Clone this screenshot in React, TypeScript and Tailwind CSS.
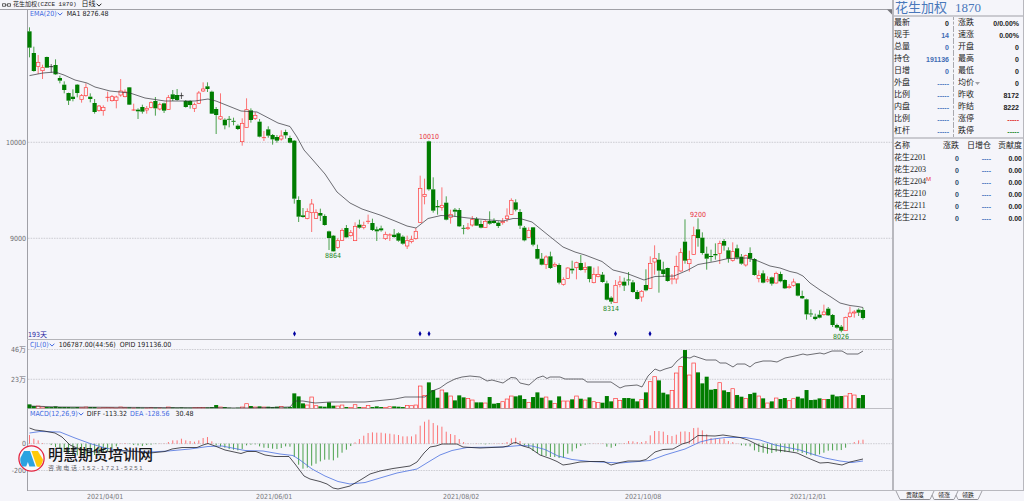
import React, { useState } from "react";

// d = down (filled green), u = up (hollow red), f = flat (black)
type Kind = "d" | "u" | "f";
type Bar = [Kind, number, number, number, number];

interface Segment {
  base: number;
  bars: Bar[];
}

// high, body top, body bottom, low in thirds of a chart unit, offset by base
const segments: Segment[] = [
  {
    base: 0,
    bars: [
      ["d", 82, 94, 143, 172], ["d", 140, 159, 213, 215], ["u", 165, 187, 199, 222], ["u", 194, 203, 212, 237],
      ["d", 170, 171, 203, 204], ["f", 192, 200, 200, 218], ["d", 178, 195, 223, 225], ["d", 227, 234, 242, 250],
      ["d", 244, 254, 270, 280], ["d", 278, 279, 302, 315], ["d", 268, 290, 297, 304], ["d", 252, 254, 279, 292],
      ["u", 282, 287, 298, 308], ["u", 250, 263, 287, 290], ["d", 280, 290, 297, 307], ["d", 297, 309, 336, 341],
      ["u", 315, 318, 331, 335], ["u", 316, 322, 332, 347], ["u", 275, 292, 292, 305], ["u", 285, 290, 302, 305],
      ["u", 287, 291, 301, 325], ["u", 237, 273, 285, 290], ["u", 268, 276, 290, 292], ["d", 261, 262, 314, 315],
      ["u", 311, 330, 330, 332], ["d", 325, 329, 334, 357], ["d", 314, 321, 335, 341], ["u", 318, 325, 330, 341],
      ["u", 304, 308, 322, 325], ["d", 291, 303, 325, 347], ["u", 308, 314, 327, 331], ["d", 308, 310, 332, 339],
      ["u", 285, 293, 328, 329], ["d", 270, 283, 297, 303], ["d", 267, 285, 300, 302], ["f", 278, 287, 287, 297],
      ["d", 300, 303, 321, 323], ["d", 301, 303, 315, 326], ["u", 308, 314, 325, 336], ["u", 273, 279, 310, 312],
      ["u", 247, 267, 273, 276], ["d", 247, 259, 267, 276], ["d", 272, 275, 341, 342], ["d", 321, 327, 345, 402],
      ["u", 280, 350, 357, 360], ["d", 355, 359, 376, 388], ["d", 348, 358, 360, 382],
    ],
  },
  {
    base: 180,
    bars: [
      ["d", 173, 184, 186, 196], ["d", 193, 197, 207, 210], ["u", 175, 190, 245, 257], ["u", 115, 149, 202, 203],
      ["d", 145, 151, 180, 188], ["u", 157, 166, 175, 180], ["d", 177, 185, 230, 232], ["u", 213, 233, 235, 243],
      ["d", 199, 208, 227, 233], ["d", 222, 225, 238, 254], ["d", 225, 231, 242, 248], ["u", 211, 228, 237, 242],
      ["d", 209, 216, 226, 236], ["d", 227, 234, 248, 250], ["d", 240, 242, 416, 431], ["d", 409, 420, 470, 486],
      ["d", 444, 466, 471, 473], ["u", 445, 455, 475, 478], ["u", 417, 432, 458, 516], ["u", 448, 458, 475, 477],
      ["d", 446, 459, 467, 483], ["d", 463, 468, 495, 497], ["d", 512, 514, 534, 570], ["d", 525, 527, 574, 575],
      ["u", 535, 542, 562, 566], ["u", 505, 511, 541, 543], ["d", 495, 504, 532, 533], ["u", 510, 518, 527, 530],
      ["u", 487, 499, 542, 543], ["d", 479, 494, 503, 506], ["u", 485, 496, 502, 508], ["u", 464, 484, 486, 492],
      ["d", 476, 489, 510, 513], ["d", 500, 508, 514, 543], ["d", 497, 505, 511, 515], ["u", 515, 523, 536, 540],
      ["u", 520, 525, 527, 543], ["d", 507, 524, 531, 533], ["d", 517, 520, 542, 545], ["d", 526, 530, 551, 554],
      ["u", 527, 542, 558, 567], ["u", 527, 539, 545, 550], ["u", 504, 514, 536, 539], ["u", 347, 385, 487, 489],
      ["u", 356, 403, 409, 433], ["d", 242, 244, 388, 392], ["d", 352, 388, 452, 458],
    ],
  },
  {
    base: 360,
    bars: [
      ["d", 240, 258, 262, 284], ["u", 202, 256, 262, 272], ["d", 229, 248, 299, 301], ["u", 269, 283, 292, 311],
      ["d", 264, 269, 275, 290], ["d", 264, 270, 319, 321], ["d", 315, 325, 327, 343], ["u", 309, 323, 326, 330],
      ["u", 288, 299, 315, 320], ["d", 291, 297, 317, 318], ["d", 301, 312, 323, 325], ["u", 300, 304, 322, 323],
      ["d", 274, 303, 311, 314], ["d", 295, 303, 309, 311], ["d", 304, 308, 318, 324], ["u", 294, 304, 308, 314],
      ["u", 265, 288, 296, 306], ["u", 235, 241, 283, 285], ["d", 238, 247, 269, 274], ["d", 267, 276, 317, 327],
      ["d", 318, 323, 361, 364], ["u", 322, 331, 352, 353], ["d", 321, 322, 374, 379], ["d", 374, 387, 416, 418],
      ["d", 399, 416, 434, 436], ["u", 406, 411, 433, 447], ["d", 395, 409, 444, 447], ["u", 427, 433, 438, 441],
      ["d", 430, 435, 488, 493], ["u", 472, 479, 493, 497], ["u", 442, 444, 475, 477], ["d", 422, 446, 451, 461],
      ["u", 425, 428, 443, 478], ["d", 405, 429, 450, 452], ["u", 427, 442, 448, 458], ["d", 438, 439, 477, 487],
      ["u", 443, 463, 488, 490], ["u", 439, 463, 469, 472], ["d", 456, 464, 486, 488], ["d", 482, 490, 539, 541],
      ["d", 529, 533, 545, 552], ["u", 480, 496, 548, 549], ["u", 468, 486, 493, 502], ["d", 473, 485, 497, 513],
      ["d", 456, 480, 482, 496], ["d", 480, 487, 516, 518], ["d", 510, 516, 537, 539],
    ],
  },
  {
    base: 570,
    bars: [
      ["u", 300, 304, 321, 335], ["d", 238, 285, 301, 304], ["u", 199, 220, 295, 296], ["u", 166, 205, 216, 254],
      ["d", 189, 209, 242, 308], ["d", 215, 238, 252, 261], ["d", 233, 234, 273, 275], ["u", 252, 267, 269, 283],
      ["u", 197, 229, 267, 281], ["u", 175, 188, 243, 245], ["d", 88, 155, 212, 221], ["u", 182, 208, 221, 245],
      ["u", 110, 136, 193, 195], ["d", 85, 118, 144, 170], ["d", 127, 143, 189, 194], ["d", 170, 191, 206, 239],
      ["d", 179, 198, 201, 215], ["d", 160, 192, 196, 209], ["u", 152, 160, 190, 222], ["d", 147, 153, 167, 182],
      ["d", 172, 181, 206, 218], ["u", 157, 185, 211, 215], ["d", 164, 175, 203, 208], ["d", 192, 200, 221, 224],
      ["u", 194, 197, 225, 230], ["d", 172, 189, 206, 216], ["d", 204, 207, 255, 257], ["u", 241, 256, 265, 277],
      ["d", 241, 250, 278, 280], ["u", 259, 269, 273, 277], ["d", 260, 262, 281, 287], ["u", 245, 250, 279, 281],
      ["d", 245, 252, 274, 277], ["d", 268, 270, 295, 297], ["u", 282, 290, 293, 296], ["u", 266, 276, 286, 290],
      ["d", 279, 280, 317, 319], ["d", 302, 318, 325, 327], ["d", 326, 328, 373, 389], ["d", 358, 372, 374, 381],
      ["d", 371, 380, 387, 391], ["d", 361, 374, 383, 385], ["u", 344, 366, 374, 377], ["d", 351, 356, 376, 378],
      ["d", 372, 375, 405, 411], ["d", 401, 405, 413, 416], ["d", 405, 410, 422, 427], ["u", 380, 382, 422, 423],
      ["u", 350, 369, 380, 383], ["u", 360, 366, 369, 383], ["d", 355, 359, 368, 378], ["d", 353, 360, 384, 389],
    ],
  },
];

const candles = segments.flatMap(({ base, bars }) =>
  bars.map(([kind, high, top, bottom, low]) => ({
    kind,
    high: (high + base) / 3,
    top: (top + base) / 3,
    bottom: (bottom + base) / 3,
    low: (low + base) / 3,
  }))
);

const volumes = [
  13, 8, 8, 5, 5, 5, 7, 5, 5, 5, 4, 5, 3, 5, 5, 5, 2, 3, 4, 3, 2, 5, 3, 4, 2, 4, 3, 2, 3, 3, 2, 2, 5, 4, 3, 4, 3, 3, 3, 4,
  4, 4, 5, 11, 5, 5, 3, 2, 3, 5, 15, 8, 5, 7, 5, 6, 5, 6, 7, 4, 5, 46, 37, 16, 11, 35, 9, 7, 6, 19, 9, 8, 11, 5, 4, 12,
  5, 4, 10, 5, 7, 5, 4, 6, 7, 6, 5, 10, 9, 11, 68, 40, 79, 56, 33, 56, 49, 38, 25, 40, 34, 31, 26, 19, 19, 17, 35, 15,
  17, 21, 29, 38, 37, 40, 29, 19, 35, 49, 33, 35, 25, 16, 37, 23, 23, 28, 38, 30, 26, 34, 21, 19, 18, 38, 22, 31, 25,
  32, 32, 30, 22, 28, 49, 81, 96, 85, 48, 43, 55, 107, 127, 176, 101, 137, 109, 76, 96, 57, 59, 78, 55, 50, 60, 41, 36,
  31, 44, 48, 38, 31, 17, 22, 32, 29, 32, 24, 30, 36, 31, 56, 26, 27, 31, 28, 29, 42, 37, 38, 38, 46, 41, 32, 41,
];

const histogram = [
  26, 15, 10, 2, 0, -4, -10, -15, -25, -30, -34, -35, -35, -32, -33, -34, -32, -28, -22, -15, -8, 1, 2, -1, -4, -5, -7,
  -4, -3, -1, 1, 1, 5, 10, 10, 15, 10, 8, 6, 10, 17, 20, 7, -5, -8, -12, -16, -18, -20, -16, -5, -3, -2, -8, -12, -13,
  -15, -16, -13, -8, -9, -40, -63, -75, -72, -66, -60, -53, -48, -48, -50, -42, -27, -18, -7, 4, 14, 24, 32, 34, 33,
  33, 31, 30, 28, 26, 22, 22, 22, 28, 54, 66, 72, 62, 55, 51, 36, 29, 26, 14, 5, 1, 0, 1, -1, -2, -1, 1, 1, 2, 5, 16,
  18, 8, -5, -10, -22, -28, -35, -37, -40, -40, -43, -42, -30, -23, -14, -7, -3, -1, 1, 1, 1, -9, -12, -7, -1, 2, 8, 7,
  5, 5, 8, 25, 38, 38, 36, 26, 23, 27, 36, 37, 35, 47, 48, 40, 28, 17, 15, 15, 15, 8, 5, 1, -5, -6, -8, -20, -25, -27,
  -30, -28, -24, -26, -25, -24, -23, -24, -28, -33, -35, -35, -32, -27, -21, -20, -20, -19, -12, -1, 5, 10, 12,
];

const emaLine =
  "29.5,75.6 43,73 55,72 64,75 75,80 87,83 95,87 110,91 120,92 130,93 145,98 165,101 195,101 208,99 216,101 230,106.6 241,111 257,112 278,123 290,126.5 297,137 304,150 312,159 325,174 337,192 350,203 362,209 380,215 395,221 407,226 416,228 428,218.5 441,215.5 452,216 468,218 490,220 503,221 513,218.5 520,218.5 532,222 548,235 563,247 575,252 585,255 602,261.5 613,270 627,273.5 644,280 655,276.5 674,276 688,270 698,264.5 715,261.5 728,258.5 747,258 758,261 770,266 780,268 790,271.5 797,273 803,276 810,283 820,290 831,297 840,303 850,305.5 858,306.5 863,307.5";
const openInterestLine =
  "29,406 60,407 250,408 270,407.5 290,407 295,401 303,401 315,403 330,402 340,402 365,402 380,400.5 395,399 405,397 425,397 432,391 440,388 447,383 455,379 462,377 470,376 480,377 487,381 492,380 503,383 511,377.5 516,378 520,383 529,385 537,378 543,376 547,378.5 550,377 560,377 565,379 583,379 587,382 611,382 620,388 625,386 637,385 642,387 648,376 655,369 660,371 665,369 672,367 677,361 682,357 690,358 694,356 706,360 716,360 720,363 726,363 733,367 737,364 745,364 750,367 755,363 763,361 771,361 777,362 785,358 795,356 803,354 807,355 820,353 824,354 832,351 842,351 847,354 858,354 863,351";
const diffLine =
  "29.5,428 35,430 44,431 55,433 62,437 70,445 77,448 85,450 95,452 105,452 115,450.5 135,451.5 150,453 165,451.5 172,449 182,447.5 197,447.5 203,445 208,443.5 215,446 225,450 241,453.5 247,451.5 256,451.5 265,455 275,456.5 289,456.5 295,464 304,476 310,479 320,481.5 327,484 333,488 338,489 350,486 362,479 370,474 380,471 393,468.5 410,466 417,462 424,453 430,447 436,446 442,444 457,444 463,447 480,448 503,447 508,446 513,443 516,442.5 523,446 530,448 540,455 550,458.5 557,461.5 563,465 570,464 580,462 590,461.5 604,461.5 611,465 620,462.5 628,461 640,461 646,459.5 655,452 663,449.5 673,449 682,444 689,442 698,435.5 715,436 723,435 740,437.5 748,440 760,446 770,449 785,451 797,453 808,458 820,463 828,462.5 842,465 850,462 863,459";
const deaLine =
  "29.5,433 40,431.5 60,432 75,438 90,443.5 105,448 120,450.5 150,452 168,451 190,449 208,446.5 222,446 245,450.5 263,451 280,454 293,455.5 300,460 312,469 325,476 338,481.5 350,484 365,482.5 380,478 397,473 417,469 430,461 440,455 452,450.5 467,447.5 503,447 520,445.5 532,446 545,449.5 558,456 572,459.5 590,461.5 620,463 650,460.5 665,455 685,449 700,442 710,439.5 725,437.5 745,437.5 760,440 775,445 790,448 800,450 812,454 825,458 840,461 852,462.5 863,461";

const RED = "#ff3c3c";
const GREEN = "#007d00";

const colorOf = (kind: Kind) => (kind === "u" ? RED : kind === "d" ? GREEN : "#222222");
const xAt = (i: number) => 29.5 + i * 4.341;

const quotes = [
  { left: "最新", value: "0", tone: "text-[#222]", right: "涨跌", other: "0/0.00%" },
  { left: "现手", value: "14", tone: "text-[#3f6cb4]", right: "速涨", other: "0.00%" },
  { left: "总量", value: "0", tone: "text-[#3f6cb4]", right: "开盘", other: "0" },
  { left: "持仓", value: "191136", tone: "text-[#3f6cb4]", right: "最高", other: "0" },
  { left: "日增", value: "0", tone: "text-[#3f6cb4]", right: "最低", other: "0" },
  { left: "外盘", value: "-----", tone: "text-[#4a78c0]", right: "均价", other: "0", menu: true },
  { left: "比例", value: "-----", tone: "text-[#4a78c0]", right: "昨收", other: "8172" },
  { left: "内盘", value: "-----", tone: "text-[#4a78c0]", right: "昨结", other: "8222" },
  { left: "比例", value: "-----", tone: "text-[#4a78c0]", right: "涨停", other: "-----", otherTone: "text-[#e02c2c]" },
  { left: "杠杆", value: "-----", tone: "text-[#4a78c0]", right: "跌停", other: "-----", otherTone: "text-[#1c8a30]" },
];

const contracts = [
  { name: "花生2201" },
  { name: "花生2203" },
  { name: "花生2204", main: true },
  { name: "花生2210" },
  { name: "花生2211" },
  { name: "花生2212" },
];

const sansFont = "font-['DejaVu_Sans_Condensed','DejaVu_Sans','Noto_Sans_CJK_SC',sans-serif]";
const cjkFont = "font-['Liberation_Serif','Noto_Sans_CJK_SC',sans-serif]";

function Chevron() {
  return (
    <svg className="w-[6px] h-[4px]" viewBox="0 0 6 4" fill="none" stroke="currentColor" strokeWidth="1">
      <path d="M0.6 0.7L3 3.1L5.4 0.7" />
    </svg>
  );
}

function Grid({ lines }: { lines: { y: number; label: string }[] }) {
  return (
    <>
      {lines.map((line) => (
        <g key={line.label}>
          <line x1="28" x2="892" y1={line.y} y2={line.y} stroke="#c4c4ca" strokeWidth="0.8" strokeDasharray="1.6 1" />
          <text x="26" y={line.y + 2.6} textAnchor="end" fontSize="7" fill="#6c6c70">
            {line.label}
          </text>
        </g>
      ))}
    </>
  );
}

function Frame({ top, bottom }: { top: number; bottom: number }) {
  return <line x1="27.5" x2="27.5" y1={top} y2={bottom} stroke="#a0a0a6" />;
}

function PricePanel() {
  return (
    <section className="relative">
      <svg className={`block w-full h-auto ${sansFont}`} viewBox="0 9 892 331" role="img" aria-label="K线图">
        <Grid lines={[{ y: 142.3, label: "10000" }, { y: 238.3, label: "9000" }]} />
        <line x1="0" x2="892" y1="9.5" y2="9.5" stroke="#a0a0a6" />
        <path d="M887 9.5H892V14.5Z" fill="#77777c" />
        <Frame top={9} bottom={340} />
        <line x1="27" x2="892" y1="339.5" y2="339.5" stroke="#b4b4b9" />
        {candles.map((c, i) => {
          const x = xAt(i);
          const color = colorOf(c.kind);
          const height = c.bottom - c.top;
          return (
            <g key={i} stroke={color}>
              <path d={`M${x} ${c.high}V${c.top}M${x} ${c.bottom}V${c.low}`} strokeWidth="0.7" />
              {height < 1 ? (
                <line x1={x - 2.1} x2={x + 2.1} y1={c.top} y2={c.top} strokeWidth="0.9" />
              ) : c.kind === "u" ? (
                <rect x={x - 1.7} y={c.top} width="3.4" height={height} fill="#f5f5fa" strokeWidth="0.7" />
              ) : (
                <rect x={x - 2.1} y={c.top} width="4.2" height={height} fill={color} stroke="none" />
              )}
            </g>
          );
        })}
        <polyline points={emaLine} fill="none" stroke="#303036" strokeWidth="0.7" />
        {[294.5, 420, 429, 615.5, 650].map((x) => (
          <path key={x} d={`M${x} 331L${x + 1.5} 333.7L${x} 336.4L${x - 1.5} 333.7Z`} fill="#0000a0" />
        ))}
        <g fontSize="7" textAnchor="middle">
          <text x="429" y="139" fill="#e8303c">10010</text>
          <text x="698" y="217" fill="#e8303c">9200</text>
          <text x="333" y="258" fill="#1c861c">8864</text>
          <text x="611" y="311" fill="#1c861c">8314</text>
          <text x="841" y="339" fill="#1c861c">8026</text>
        </g>
        <text x="28" y="337" fontSize="7" fill="#2424a0">193天</text>
      </svg>
      <div className="absolute top-0 left-[30px] h-[10px] flex items-center gap-1 leading-none">
        <button className="flex items-center text-[#4169e1]">EMA(20)<Chevron /></button>
        <span>MA1 8276.48</span>
      </div>
    </section>
  );
}

function VolumePanel() {
  return (
    <section className="relative">
      <svg className={`block w-full h-auto ${sansFont}`} viewBox="0 340 892 69" role="img" aria-label="成交量">
        <Grid lines={[{ y: 349.5, label: "46万" }, { y: 379.3, label: "23万" }]} />
        <Frame top={340} bottom={409} />
        {volumes.map((v, i) => {
          const up = candles[i].kind === "u";
          const h = v / 3;
          return up ? (
            <rect key={i} x={xAt(i) - 1.8} y={408.7 - h} width="3.6" height={h} fill="#f5f5fa" stroke={RED} strokeWidth="0.7" />
          ) : (
            <rect key={i} x={xAt(i) - 2} y={408.7 - h} width="4" height={h} fill={GREEN} />
          );
        })}
        <polyline points={openInterestLine} fill="none" stroke="#303036" strokeWidth="0.7" />
        <line x1="27" x2="892" y1="408.6" y2="408.6" stroke="#a8a8ad" strokeWidth="0.8" />
      </svg>
      <div className="absolute top-0 left-[30px] h-[10px] flex items-center gap-1 leading-none">
        <button className="flex items-center text-[#4169e1]">CJL(0)<Chevron /></button>
        <span>106787.00(44:56)</span>
        <span>OPID 191136.00</span>
      </div>
    </section>
  );
}

function MacdPanel() {
  return (
    <section className="relative">
      <svg className={`block w-full h-auto ${sansFont}`} viewBox="0 409 892 82" role="img" aria-label="MACD">
        <Grid lines={[{ y: 443.7, label: "0" }, { y: 470.5, label: "-200" }]} />
        <Frame top={409} bottom={491} />
        {histogram.map((v, i) => (
          <line
            key={i}
            x1={xAt(i)}
            x2={xAt(i)}
            y1="443.7"
            y2={443.7 - v / 3}
            stroke={v > 0 ? RED : GREEN}
            strokeWidth="0.7"
          />
        ))}
        <polyline points={deaLine} fill="none" stroke="#4a70e0" strokeWidth="0.8" />
        <polyline points={diffLine} fill="none" stroke="#26262c" strokeWidth="0.8" />
        <line x1="27" x2="892" y1="490.6" y2="490.6" stroke="#a0a0a6" strokeWidth="0.8" />
      </svg>
      <div className="absolute top-0 left-[30px] h-[10px] flex items-center gap-[3px] leading-none">
        <button className="flex items-center text-[#4169e1]">MACD(12,26,9)<Chevron /></button>
        <span>DIFF -113.32</span>
        <span className="text-[#4169e1]">DEA -128.56</span>
        <span className="ml-[3px]">30.48</span>
      </div>

      {/* Watermark */}
      <div className="absolute top-[36px] left-[18px] flex items-center gap-[3px]">
        <svg className="w-[27px] h-[27px]" viewBox="0 0 27 27">
          <circle cx="13.5" cy="13.5" r="12.6" fill="#f8f8fc" stroke="#e3243f" strokeWidth="1.3" />
          <path d="M6 6H12L17.4 21.6H11.4L9.9 17L8.2 21.6H4.4C2.6 18.8 1.9 15.6 2.4 13Z" fill="#2ba3e0" />
          <path d="M13.4 6H19.8L25 14.4C24.8 17.2 23.4 20 21.4 22L18.8 21.6Z" fill="#ffca0a" />
        </svg>
        <div className="font-['Liberation_Sans','Noto_Sans_CJK_SC',sans-serif] whitespace-nowrap">
          <p className="text-[15px] leading-[18px] font-medium text-[#161618]">明慧期货培训网</p>
          <p className="text-[6px] leading-[8px] text-[#66666a]">咨 询 电 话 : 1 5 2 - 1 7 2 1 - 5 2 5 1</p>
        </div>
      </div>
    </section>
  );
}

function DateAxis() {
  return (
    <svg className={`block w-full h-auto ${sansFont}`} viewBox="0 491 892 10">
      <g fontSize="7" fill="#78787c">
        <text x="87" y="499">2021/04/01</text>
        <text x="256" y="499">2021/06/01</text>
        <text x="443" y="499">2021/08/02</text>
        <text x="625" y="499">2021/10/08</text>
        <text x="790" y="499">2021/12/01</text>
      </g>
    </svg>
  );
}

function QuotePanel() {
  return (
    <div className="flex border-y-2 border-[#cacad0]">
      <table className="w-[60px] border-r border-dashed border-[#a8a8ae]">
        <tbody>
          {quotes.map((q, i) => (
            <tr key={i} className="h-[12px]">
              <th scope="row" className="p-0 text-left font-normal">{q.left}</th>
              <td className={`p-0 pr-1 text-right text-[7px] font-bold font-['Liberation_Sans',sans-serif] ${q.tone}`}>{q.value}</td>
            </tr>
          ))}
        </tbody>
      </table>
      <table className="flex-1 ml-1">
        <tbody>
          {quotes.map((q, i) => (
            <tr key={i} className="h-[12px]">
              <th scope="row" className="p-0 text-left font-normal whitespace-nowrap">
                {q.menu ? (
                  <button className="flex items-center gap-px">
                    {q.right}
                    <svg className="w-[5px] h-[3px]" viewBox="0 0 5 3"><path d="M0 0H5L2.5 3Z" fill="#a0a0a6" /></svg>
                  </button>
                ) : (
                  q.right
                )}
              </th>
              <td className={`p-0 pr-1 text-right text-[7px] font-bold font-['Liberation_Sans',sans-serif] ${q.otherTone || "text-[#222]"}`}>{q.other}</td>
            </tr>
          ))}
        </tbody>
      </table>
    </div>
  );
}

function ContractTable() {
  return (
    <table className="w-full table-fixed">
      <thead>
        <tr className="h-[13px]">
          <th className="p-0 w-[38px] text-left font-normal">名称</th>
          <th className="p-0 w-[27px] text-right font-normal">涨跌</th>
          <th className="p-0 w-[32px] text-right font-normal">日增仓</th>
          <th className="p-0 pr-px text-right font-normal">贡献度</th>
        </tr>
      </thead>
      <tbody>
        {contracts.map((c) => (
          <tr key={c.name} className="h-[12px]">
            <td className="p-0 whitespace-nowrap">
              {c.name}
              {c.main && <sup className="text-[6px] leading-none text-[#e83030] font-['Liberation_Sans',sans-serif]">M</sup>}
            </td>
            <td className="p-0 text-right text-[7px] font-bold font-['Liberation_Sans',sans-serif] text-[#2c4a6c]">0</td>
            <td className="p-0 text-right text-[7px] font-bold font-['Liberation_Sans',sans-serif] text-[#4a78c0]">----</td>
            <td className="p-0 pr-px text-right text-[7px] font-bold font-['Liberation_Sans',sans-serif] text-[#222]">0.00</td>
          </tr>
        ))}
      </tbody>
    </table>
  );
}

function Slash({ path }: { path: string }) {
  return (
    <svg className="w-[6px] h-[9px]" viewBox="0 0 6 9" fill="none" stroke="#8c8c92" strokeWidth="0.8">
      <path d={path} />
    </svg>
  );
}

export default function App() {
  const [tab, setTab] = useState("贡献度");

  return (
    <main className={`flex w-full bg-[#f5f5fa] text-[7px] text-[#222] ${sansFont}`}>
      {/* Charts */}
      <div className="flex-1 min-w-0">
        <header className="h-[9px] flex items-center gap-[2px] pl-[2px] leading-none">
          <svg className="w-[9px] h-[4px]" viewBox="0 0 9 4" fill="none" stroke="#444" strokeWidth="0.8">
            <path d="M0.5 0.7H3.5V3.3H0.5ZM5.5 0.7H8.5V3.3H5.5ZM3.5 2H5.5" />
          </svg>
          <h1 className="text-[6px] font-['Liberation_Mono','Noto_Sans_CJK_SC',monospace]">花生加权(CZCE 1870)</h1>
          <button className="ml-[3px] flex items-center">日线<Chevron /></button>
        </header>
        <PricePanel />
        <VolumePanel />
        <MacdPanel />
        <DateAxis />
      </div>

      {/* Quote sidebar */}
      <aside className={`w-[132px] flex flex-col text-[8px] leading-none ${cjkFont}`}>
        <div className="flex-1 border-l-2 border-r border-b border-[#b8b8be]">
          <h2 className="h-[15px] pl-px flex items-center gap-2 text-[13px] text-[#4a78ba]">
            <span>花生加权</span>
            <span>1870</span>
          </h2>
          <QuotePanel />
          <ContractTable />
        </div>
        <div className="h-[10px] pl-[3px] flex items-start text-[6px]">
          <Slash path="M1 0L5 8.5H6" />
          <button className="h-[9px] px-[5px] border-b border-[#8c8c92]" aria-pressed={tab === "贡献度"} onClick={() => setTab("贡献度")}>贡献度</button>
          <Slash path="M0 8.5H1L5 0M3 4L5 8.5H6" />
          <button className="h-[9px] px-[3px] border-b border-[#8c8c92]" aria-pressed={tab === "领涨"} onClick={() => setTab("领涨")}>领涨</button>
          <Slash path="M0 8.5H1L5 0M3 4L5 8.5H6" />
          <button className="h-[9px] px-[3px] border-b border-[#8c8c92]" aria-pressed={tab === "领跌"} onClick={() => setTab("领跌")}>领跌</button>
          <Slash path="M0 8.5H1L5 0" />
        </div>
      </aside>
    </main>
  );
}
